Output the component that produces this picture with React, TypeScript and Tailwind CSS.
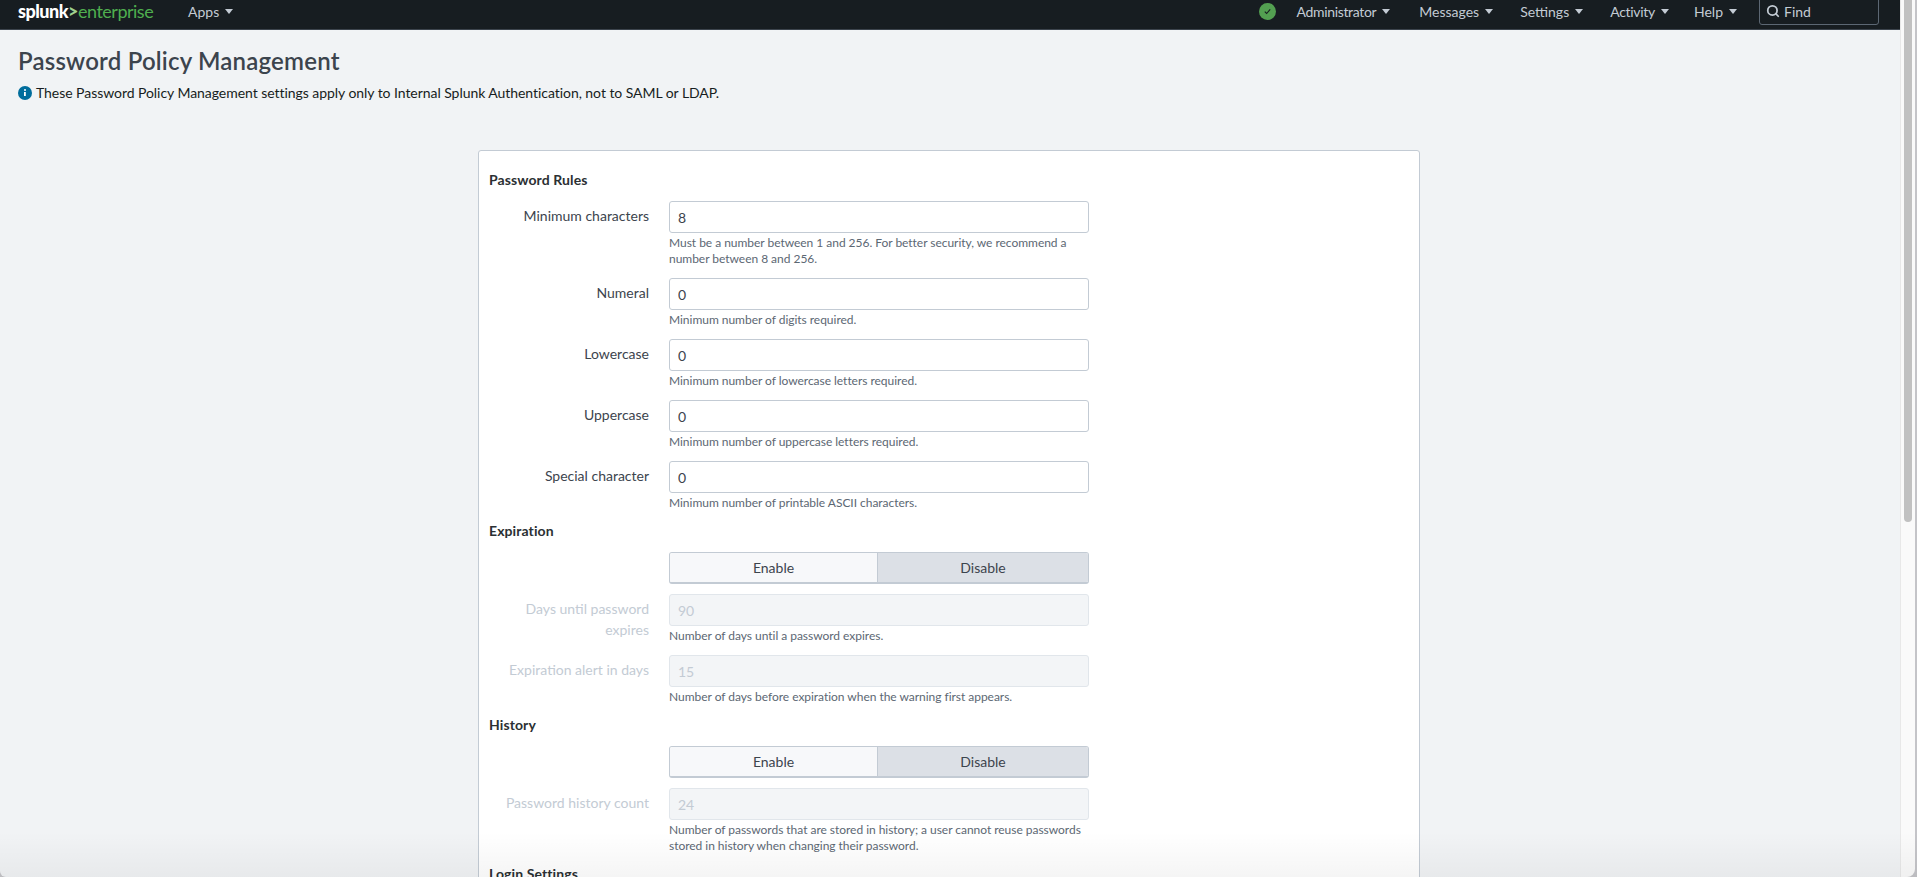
import { Search } from 'lucide-react'

const FONT = "font-['Lato','Noto_Sans',sans-serif]"

function Caret() {
  return (
    <svg viewBox="0 0 8 5" className="ml-[6px] h-[5px] w-[8px] shrink-0 fill-current">
      <path d="M0 0h8L4 5z" />
    </svg>
  )
}

function NavItem({ label, className }: { label: string; className: string }) {
  return (
    <span className={`flex items-center text-[14px] ${className}`}>
      {label}
      <Caret />
    </span>
  )
}

function TopBar() {
  return (
    <header className="flex h-[30px] shrink-0 items-start overflow-hidden border-b border-[#3c444d] bg-[#171d21] text-[#c3cbd4]">
      <div className="flex h-[22px] w-full items-center">
        <span className="ml-[18px] w-[136px] text-[18px] font-black leading-none tracking-[-0.5px] text-white">
          splunk<span className="text-[#9fd08f]">&gt;</span>
          <span className="font-normal text-[#4fae4f]">enterprise</span>
        </span>
        <NavItem label="Apps" className="ml-[34px]" />
        <span className="ml-auto flex h-[17px] w-[17px] items-center justify-center rounded-full bg-[#53a051]">
          <svg viewBox="0 0 10 10" className="h-[9px] w-[9px] fill-none stroke-[#171d21] stroke-[1.2]">
            <path d="M2 5.2l2 2 4-4.6" />
          </svg>
        </span>
        <NavItem label="Administrator" className="ml-[21px] tracking-[-0.35px]" />
        <NavItem label="Messages" className="ml-[29px]" />
        <NavItem label="Settings" className="ml-[27px]" />
        <NavItem label="Activity" className="ml-[27px] tracking-[-0.3px]" />
        <NavItem label="Help" className="ml-[25px]" />
        <div className="-mt-px ml-[22px] mr-[21px] flex h-[26px] w-[120px] items-center self-start rounded-b-[3px] border border-[#5c6773] pb-[2px] pl-[6px] text-[14px]">
          <Search size={14} strokeWidth={3} className="mr-[4px]" />
          Find
        </div>
      </div>
    </header>
  )
}

function Section({ title }: { title: string }) {
  return (
    <h2 className="mb-[12px] mt-px h-[18px] text-[14px] font-bold leading-[18px] tracking-[0.1px] text-[#2b3033]">
      {title}
    </h2>
  )
}

interface FieldProps {
  label: string
  value: string
  help: string[]
  disabled?: boolean
}

function Field({ label, value, help, disabled }: FieldProps) {
  return (
    <div className="mb-[11px] flex">
      <label
        className={`w-[160px] shrink-0 pt-[4px] text-right text-[14px] leading-[21px] ${disabled ? 'text-[#c3cbd4]' : 'text-[#3c444d]'}`}
      >
        {label}
      </label>
      <div className="ml-[20px] w-[420px]">
        <input
          readOnly
          disabled={disabled}
          value={value}
          className={`block h-[32px] w-full rounded-[3px] border px-[8px] text-[14px] outline-none ${
            disabled
              ? 'border-[#e1e6eb] bg-[#f3f5f7] text-[#c3cbd4]'
              : 'border-[#c3cbd4] bg-white text-[#3c444d]'
          }`}
        />
        <div className="mt-[2px] text-[12px] leading-[16px] tracking-[-0.03px] text-[#5c6773]">
          {help.map((line) => (
            <div key={line}>{line}</div>
          ))}
        </div>
      </div>
    </div>
  )
}

function Toggle() {
  return (
    <div className="mb-[10px] ml-[180px] flex h-[32px] w-[420px] overflow-hidden rounded-[3px] border border-b-2 border-[#c3cbd4] text-[14px] text-[#3c444d]">
      <div className="flex w-[208px] items-center justify-center border-r border-[#c3cbd4] bg-[#f7f8fa]">Enable</div>
      <div className="flex flex-1 items-center justify-center bg-[#dce0e6]">Disable</div>
    </div>
  )
}

export default function App() {
  return (
    <div className={`relative flex h-screen overflow-hidden bg-[#c4c4c8] ${FONT}`}>
      <main className="flex min-w-0 flex-1 flex-col overflow-hidden rounded-bl-[6px] bg-[#f1f3f5]">
        <TopBar />
        <div className="px-[18px]">
          <h1 className="mt-[17px] text-[24px] font-semibold leading-[28px] tracking-[0.2px] text-[#3c444d]">
            Password Policy Management
          </h1>
          <p className="mt-[8px] flex items-center text-[14px] leading-[20px] tracking-[-0.05px] text-[#171d21]">
            <svg viewBox="0 0 14 14" className="mr-[4px] h-[14px] w-[14px] shrink-0">
              <circle cx="7" cy="7" r="7" fill="#006d9c" />
              <circle cx="7" cy="4" r="1" fill="#fff" />
              <path d="M6 6h1.8v4H6z" fill="#fff" />
            </svg>
            These Password Policy Management settings apply only to Internal Splunk Authentication, not to SAML or LDAP.
          </p>
        </div>
        <div className="mt-[47px] flex justify-center pr-[2px]">
          <section className="w-[942px] rounded-[3px] border border-[#c3cbd4] bg-white px-[10px] pt-[19px]">
            <Section title="Password Rules" />
            <Field
              label="Minimum characters"
              value="8"
              help={['Must be a number between 1 and 256. For better security, we recommend a', 'number between 8 and 256.']}
            />
            <Field label="Numeral" value="0" help={['Minimum number of digits required.']} />
            <Field label="Lowercase" value="0" help={['Minimum number of lowercase letters required.']} />
            <Field label="Uppercase" value="0" help={['Minimum number of uppercase letters required.']} />
            <Field label="Special character" value="0" help={['Minimum number of printable ASCII characters.']} />
            <Section title="Expiration" />
            <Toggle />
            <Field label="Days until password expires" value="90" help={['Number of days until a password expires.']} disabled />
            <Field
              label="Expiration alert in days"
              value="15"
              help={['Number of days before expiration when the warning first appears.']}
              disabled
            />
            <Section title="History" />
            <Toggle />
            <Field
              label="Password history count"
              value="24"
              help={['Number of passwords that are stored in history; a user cannot reuse passwords', 'stored in history when changing their password.']}
              disabled
            />
            <Section title="Login Settings" />
          </section>
        </div>
      </main>
      <aside className="mr-[2px] h-full w-[15px] shrink-0 rounded-br-[8px] border-l border-[#e8e8e8] bg-[#fafafa] pl-[3px]">
        <div className="h-[522px] w-[8px] rounded-b-[4px] bg-[#c1c1c1]" />
      </aside>
      <div className="pointer-events-none absolute inset-x-0 bottom-0 h-[45px] bg-gradient-to-b from-transparent to-black/[0.04]" />
    </div>
  )
}
